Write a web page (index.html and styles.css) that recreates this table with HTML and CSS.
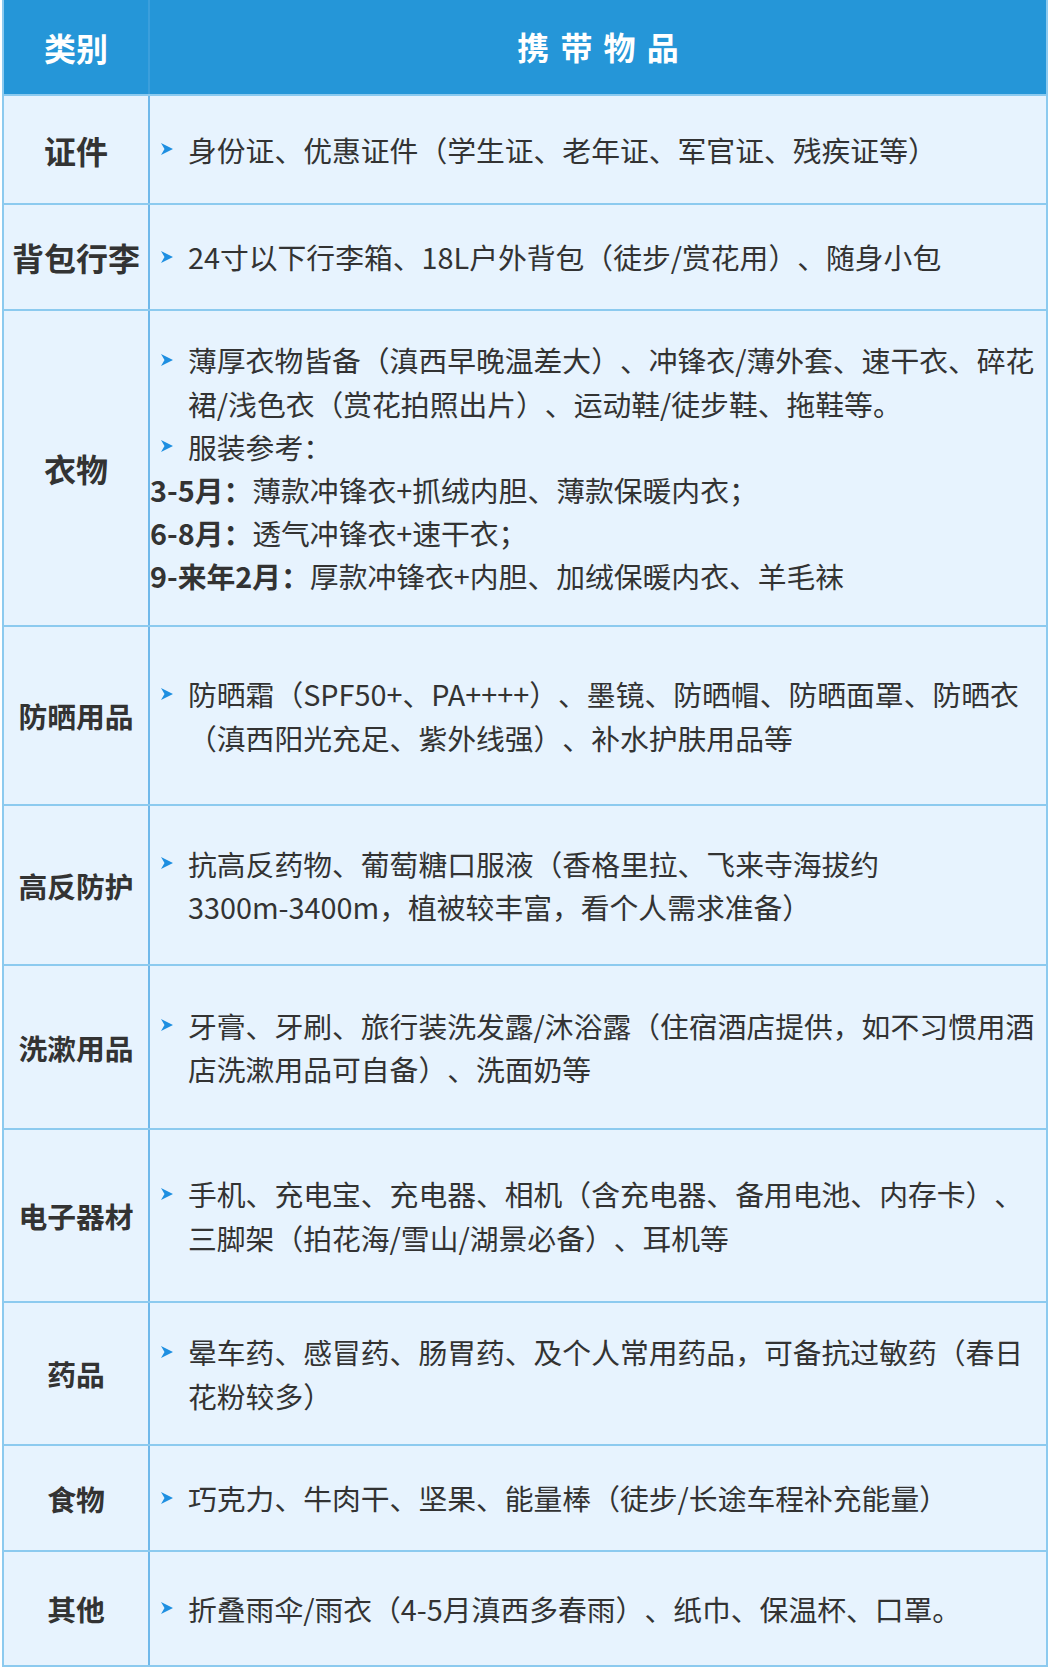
FILE: index.html
```html
<!DOCTYPE html>
<html lang="zh-CN">
<head>
<meta charset="utf-8">
<title>携带物品</title>
<link rel="stylesheet" href="styles.css">
</head>
<body>
<div class="sheet">
  <div class="row head">
    <div class="cat">类别</div>
    <div class="items"><span class="spaced">携带物品</span></div>
  </div>

  <div class="row row-id">
    <div class="cat big">证件</div>
    <div class="items">
      <ul class="list">
        <li><span class="mark"><svg class="arrow" viewBox="0 0 12 12"><path d="M0 0L12 6L0 12L3.5 6Z"/></svg></span><span>身份证、优惠证件（学生证、老年证、军官证、残疾证等）</span></li>
      </ul>
    </div>
  </div>

  <div class="row row-bag">
    <div class="cat big">背包行李</div>
    <div class="items">
      <ul class="list">
        <li><span class="mark"><svg class="arrow" viewBox="0 0 12 12"><path d="M0 0L12 6L0 12L3.5 6Z"/></svg></span><span>24寸以下行李箱、18L户外背包（徒步/赏花用）、随身小包</span></li>
      </ul>
    </div>
  </div>

  <div class="row row-clothes">
    <div class="cat big">衣物</div>
    <div class="items">
      <ul class="list">
        <li><span class="mark"><svg class="arrow" viewBox="0 0 12 12"><path d="M0 0L12 6L0 12L3.5 6Z"/></svg></span><span>薄厚衣物皆备（滇西早晚温差大）、冲锋衣/薄外套、速干衣、碎花裙/浅色衣（赏花拍照出片）、运动鞋/徒步鞋、拖鞋等。</span></li>
        <li><span class="mark"><svg class="arrow" viewBox="0 0 12 12"><path d="M0 0L12 6L0 12L3.5 6Z"/></svg></span><span>服装参考：</span></li>
      </ul>
      <p class="plain"><strong>3-5月：</strong>薄款冲锋衣+抓绒内胆、薄款保暖内衣；</p>
      <p class="plain"><strong>6-8月：</strong>透气冲锋衣+速干衣；</p>
      <p class="plain"><strong>9-来年2月：</strong>厚款冲锋衣+内胆、加绒保暖内衣、羊毛袜</p>
    </div>
  </div>

  <div class="row row-sun">
    <div class="cat">防晒用品</div>
    <div class="items">
      <ul class="list">
        <li><span class="mark"><svg class="arrow" viewBox="0 0 12 12"><path d="M0 0L12 6L0 12L3.5 6Z"/></svg></span><span>防晒霜（SPF50+、PA++++）、墨镜、防晒帽、防晒面罩、防晒衣（滇西阳光充足、紫外线强）、补水护肤用品等</span></li>
      </ul>
    </div>
  </div>

  <div class="row row-alt">
    <div class="cat">高反防护</div>
    <div class="items">
      <ul class="list">
        <li><span class="mark"><svg class="arrow" viewBox="0 0 12 12"><path d="M0 0L12 6L0 12L3.5 6Z"/></svg></span><span>抗高反药物、葡萄糖口服液（香格里拉、飞来寺海拔约<span class="nobr">3300m-3400m</span>，植被较丰富，看个人需求准备）</span></li>
      </ul>
    </div>
  </div>

  <div class="row row-wash">
    <div class="cat">洗漱用品</div>
    <div class="items">
      <ul class="list">
        <li><span class="mark"><svg class="arrow" viewBox="0 0 12 12"><path d="M0 0L12 6L0 12L3.5 6Z"/></svg></span><span>牙膏、牙刷、旅行装洗发露/沐浴露（住宿酒店提供，如不习惯用酒店洗漱用品可自备）、洗面奶等</span></li>
      </ul>
    </div>
  </div>

  <div class="row row-tech">
    <div class="cat">电子器材</div>
    <div class="items">
      <ul class="list">
        <li><span class="mark"><svg class="arrow" viewBox="0 0 12 12"><path d="M0 0L12 6L0 12L3.5 6Z"/></svg></span><span>手机、充电宝、充电器、相机（含充电器、备用电池、内存卡）、三脚架（拍花海/雪山/湖景必备）、耳机等</span></li>
      </ul>
    </div>
  </div>

  <div class="row row-med">
    <div class="cat">药品</div>
    <div class="items">
      <ul class="list">
        <li><span class="mark"><svg class="arrow" viewBox="0 0 12 12"><path d="M0 0L12 6L0 12L3.5 6Z"/></svg></span><span>晕车药、感冒药、肠胃药、及个人常用药品，可备抗过敏药（春日花粉较多）</span></li>
      </ul>
    </div>
  </div>

  <div class="row row-food">
    <div class="cat">食物</div>
    <div class="items">
      <ul class="list">
        <li><span class="mark"><svg class="arrow" viewBox="0 0 12 12"><path d="M0 0L12 6L0 12L3.5 6Z"/></svg></span><span>巧克力、牛肉干、坚果、能量棒（徒步/长途车程补充能量）</span></li>
      </ul>
    </div>
  </div>

  <div class="row row-misc">
    <div class="cat">其他</div>
    <div class="items">
      <ul class="list">
        <li><span class="mark"><svg class="arrow" viewBox="0 0 12 12"><path d="M0 0L12 6L0 12L3.5 6Z"/></svg></span><span>折叠雨伞/雨衣（4-5月滇西多春雨）、纸巾、保温杯、口罩。</span></li>
      </ul>
    </div>
  </div>
</div>
</body>
</html>
```

FILE: styles.css
```css
html, body {
  margin: 0;
  padding: 0;
  background: #ffffff;
}

body {
  font-family: "Noto Sans CJK SC", "Noto Sans", sans-serif;
  color: #333333;
  text-spacing-trim: space-all;
}

.sheet {
  margin: 0 3px 0 2px;
  border: 2px solid #8ccaef;
  border-top: 0;
  background: #e7f3fe;
}

.row {
  display: grid;
  grid-template-columns: 146px 1fr;
  border-top: 2px solid #8ccaef;
  box-sizing: border-box;
}

.row.head {
  border-top: 0;
  height: 94px;
  background: #2596d8;
  color: #ffffff;
}

.cat {
  display: flex;
  align-items: center;
  justify-content: center;
  box-sizing: border-box;
  border-right: 2px solid #6fb8ea;
  font-size: 28.8px;
  font-weight: 700;
  white-space: nowrap;
}

.cat.big,
.head .cat {
  font-size: 32px;
}

.head .cat {
  border-right-color: #3b9fdc;
}

.items {
  display: flex;
  flex-direction: column;
  justify-content: center;
  padding-right: 5px;
  font-size: 28.8px;
  line-height: 43.2px;
}

.head .items {
  align-items: center;
  padding-right: 0;
}

.spaced {
  font-size: 32px;
  font-weight: 700;
  letter-spacing: 0.35em;
  padding-left: 0.35em;
}

.list {
  margin: 0;
  padding: 0;
  list-style: none;
}

.list li {
  display: flex;
  padding-left: 11px;
}

.mark {
  flex: none;
  display: flex;
  align-items: center;
  width: 12px;
  height: 43.2px;
  margin-right: 15px;
}

.arrow {
  width: 12px;
  height: 12px;
  fill: #1e8fe1;
}

.nobr {
  white-space: nowrap;
}

.plain {
  margin: 0;
}

.plain strong {
  font-weight: 700;
}

.row-id { height: 109px; }
.row-bag { height: 106px; }
.row-clothes { height: 316px; }
.row-sun { height: 179px; }
.row-alt { height: 160px; }
.row-wash { height: 164px; }
.row-tech { height: 173px; }
.row-med { height: 143px; }
.row-food { height: 106px; }
.row-misc { height: 115px; }
```
